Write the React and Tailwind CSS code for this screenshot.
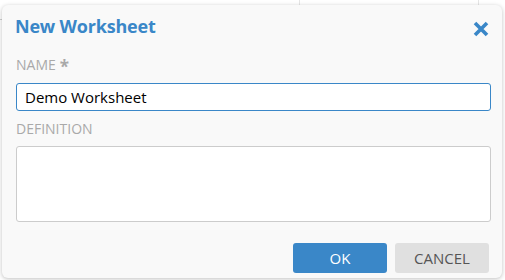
export default function App() {
  return (
    <div className="relative w-[505px] h-[280px] bg-white overflow-hidden" style={{ fontFamily: '"Open Sans", sans-serif' }}>
      <div className="absolute left-[299px] top-0 w-px h-[14px] bg-[#e6e6e6]" />
      <div className="absolute left-[478px] top-0 w-px h-[6px] bg-[#e6e6e6]" />
      <div className="absolute left-0 top-[19px] w-[3px] h-px bg-[#d0d0d0]" />
      <div className="absolute left-[2px] top-[5px] w-[500px] h-[273px] bg-[#f9f9f9] rounded-[6px] shadow-[0_1px_4px_rgba(0,0,0,0.25)] flex flex-col px-[14px] pt-[12px]">
        <div className="flex items-start justify-between h-[18px]">
          <h1 className="text-[18px] font-bold text-[#3a87c8] leading-[18px] tracking-[-0.2px] -ml-[1px]">New Worksheet</h1>
          <svg width="16" height="16" viewBox="0 0 16 16" className="mt-[4px] mr-[-1px]">
            <path d="M2 2 L14 14 M14 2 L2 14" stroke="#3a87c8" strokeWidth="3.6" strokeLinecap="butt" />
          </svg>
        </div>
        <label className="mt-[21px] h-[18px] text-[14px] text-[#a9a9a9] leading-[18px] flex items-start">NAME<span className="ml-[4px] text-[17px] font-bold leading-[18px] mt-[2px]">*</span></label>
        <div className="mt-[9px] h-[28px] w-[475px] bg-white border border-[#3a87c8] rounded-[3px] flex items-center pl-[8px] text-[15px] text-black">Demo Worksheet</div>
        <label className="mt-[9px] h-[18px] text-[14px] text-[#a9a9a9] leading-[18px]">DEFINITION</label>
        <div className="mt-[8px] h-[76px] w-[475px] bg-white border border-[#cccccc] rounded-[3px]" />
        <div className="flex justify-end gap-[8px] mt-[21px] w-[473px]">
          <button className="w-[94px] h-[30px] bg-[#3a87c8] text-white text-[15px] rounded-[3px]">OK</button>
          <button className="w-[94px] h-[30px] bg-[#e0e0e0] text-[#555] text-[15px] rounded-[3px]">CANCEL</button>
        </div>
      </div>
    </div>
  );
}
